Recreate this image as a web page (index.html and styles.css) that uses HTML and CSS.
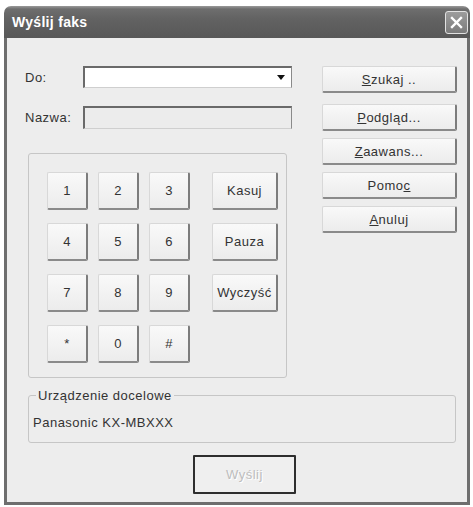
FILE: index.html
```html
<!DOCTYPE html>
<html lang="pl">
<head>
  <meta charset="UTF-8">
  <title>Wyślij faks</title>
  <link rel="stylesheet" href="styles.css">
</head>
<body>
  <div class="window">
    <div class="titlebar">
      <span class="title">Wyślij faks</span>
      <button class="close-btn" title="Zamknij">
        <svg width="13" height="13" viewBox="0 0 13 13">
          <path d="M2 2 L11 11 M11 2 L2 11" stroke="#fff" stroke-width="2.4" stroke-linecap="square"/>
        </svg>
      </button>
    </div>
    <div class="client">
      <div class="top">
        <div class="left-col">
          <div class="field-row">
            <label class="field-label">Do:</label>
            <div class="combo">
              <svg class="combo-arrow" width="8" height="5" viewBox="0 0 8 5"><path d="M0 0 H8 L4 5 Z" fill="#111"/></svg>
            </div>
          </div>
          <div class="field-row name-row">
            <label class="field-label">Nazwa:</label>
            <div class="textbox disabled"></div>
          </div>
          <div class="keypad">
            <button class="btn key">1</button>
            <button class="btn key">2</button>
            <button class="btn key">3</button>
            <button class="btn key wide">Kasuj</button>
            <button class="btn key">4</button>
            <button class="btn key">5</button>
            <button class="btn key">6</button>
            <button class="btn key wide">Pauza</button>
            <button class="btn key">7</button>
            <button class="btn key">8</button>
            <button class="btn key">9</button>
            <button class="btn key wide">Wyczyść</button>
            <button class="btn key">*</button>
            <button class="btn key">0</button>
            <button class="btn key">#</button>
          </div>
        </div>
        <div class="side-buttons">
          <button class="btn side first"><u>S</u>zukaj ..</button>
          <button class="btn side"><u>P</u>odgląd...</button>
          <button class="btn side"><u>Z</u>aawans...</button>
          <button class="btn side">Pomo<u>c</u></button>
          <button class="btn side"><u>A</u>nuluj</button>
        </div>
      </div>
      <fieldset class="device">
        <legend>Urządzenie docelowe</legend>
        Panasonic KX-MBXXX
      </fieldset>
      <div class="footer">
        <button class="btn send" disabled>Wyślij</button>
      </div>
    </div>
  </div>
</body>
</html>
```
FILE: styles.css
```css
body {
  margin: 0;
  background: #fff;
  font-family: 'Liberation Sans', Arial, sans-serif;
  font-size: 13px;
  letter-spacing: 0.5px;
  color: #333;
}
.window {
  margin: 6px 0 0 4px;
  width: 466px;
}
.titlebar {
  height: 32px;
  box-sizing: border-box;
  display: flex;
  align-items: center;
  justify-content: space-between;
  padding: 0 2px 0 8px;
  border-radius: 7px 7px 0 0;
  background: linear-gradient(#9a9a9a 0, #6e6e6e 3px, #626262 40%, #585858 100%);
}
.title {
  color: #fff;
  font-weight: bold;
  font-size: 14px;
  letter-spacing: 0.3px;
}
.close-btn {
  width: 23px;
  height: 23px;
  padding: 0;
  display: flex;
  align-items: center;
  justify-content: center;
  border: 1px solid #e2e2e2;
  border-radius: 3px;
  background: linear-gradient(#9c9c9c, #7c7c7c);
}
.client {
  height: 467px;
  box-sizing: border-box;
  background: #ededed;
  border: 3px solid #6e6e6e;
  border-top: none;
  padding: 28px 0 0 18px;
}
.top {
  display: flex;
}
.left-col {
  width: 267px;
}
.field-row {
  display: flex;
  align-items: center;
  height: 22px;
}
.name-row {
  margin-top: 18px;
  height: 23px;
}
.field-label {
  width: 58px;
}
.combo, .textbox {
  flex: 1;
  height: 100%;
  box-sizing: border-box;
  border: 1px solid #cfcfcf;
  border-top: 2px solid #6a6a6a;
  border-left: 2px solid #6a6a6a;
  border-right-color: #8a8a8a;
}
.combo {
  background: #fff;
  display: flex;
  align-items: center;
  justify-content: flex-end;
  padding-right: 6px;
}
.textbox.disabled {
  background: #ececec;
}
.keypad {
  margin: 24px 0 0 3px;
  width: 259px;
  height: 225px;
  box-sizing: border-box;
  border: 1px solid #c6c6c6;
  border-radius: 3px;
  padding: 18px 0 0 18px;
  display: grid;
  grid-template-columns: 41px 41px 41px 78px;
  grid-auto-rows: 38px;
  column-gap: 10px;
  row-gap: 13px;
  align-content: start;
}
.btn {
  font-family: inherit;
  font-size: 13px;
  letter-spacing: 0.5px;
  color: #333;
  padding: 0;
  background: linear-gradient(#f9f9f9, #ececec);
  border: 1px solid #d8d8d8;
  border-right: 2px solid #7c7c7c;
  border-bottom: 2px solid #8a8a8a;
  border-radius: 2px;
}
.key.wide {
  width: 66px;
  justify-self: end;
}
.side-buttons {
  margin-left: 30px;
  display: flex;
  flex-direction: column;
  gap: 7px;
}
.side {
  width: 135px;
  height: 27px;
}
.side.first {
  margin-bottom: 4px;
}
.device {
  margin: 10px 0 0 3px;
  width: 428px;
  box-sizing: border-box;
  border: 1px solid #c6c6c6;
  border-radius: 3px;
  padding: 12px 4px 12px 4px;
}
.device legend {
  padding: 0 2px;
  margin-left: 3px;
}
.footer {
  margin-top: 12px;
  padding-left: 168px;
}
.send {
  width: 103px;
  height: 39px;
  border: 2px solid #2e2e2e;
  border-radius: 1px;
  background: #efefef;
  color: #bdbdbd;
  text-shadow: 1px 1px 0 #fff;
}
```
